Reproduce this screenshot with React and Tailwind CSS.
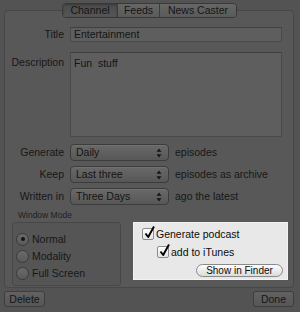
import React from "react";

const font = { fontFamily: '"Liberation Sans", Arial, sans-serif' };

function Arrows() {
  return (
    <svg width="6" height="10" viewBox="0 0 6 10" className="block">
      <path d="M3 0.5 L5.5 3.8 L0.5 3.8 Z" fill="#151515" />
      <path d="M3 9.5 L5.5 6.2 L0.5 6.2 Z" fill="#151515" />
    </svg>
  );
}

function Popup({ value, mt }) {
  return (
    <div
      className={`flex items-center justify-between w-[99px] h-[17px] rounded-[4px] border border-[#3c3c3c] bg-gradient-to-b from-[#696969] to-[#575757] pl-[5px] pr-[6px] shadow-[inset_0_1px_0_#707070] ${mt}`}
    >
      <span className="text-[10.5px] leading-none text-[#141414]">{value}</span>
      <Arrows />
    </div>
  );
}

function Row({ label, value, after, mt }) {
  return (
    <div className={`flex items-center ${mt}`}>
      <div className="w-[59px] text-right text-[10.5px] text-[#171717] leading-none">{label}</div>
      <div className="ml-[6px]">
        <Popup value={value} />
      </div>
      <div className="ml-[6px] text-[10.5px] text-[#171717] leading-none">{after}</div>
    </div>
  );
}

function Radio({ on, label }) {
  return (
    <div className="flex items-center h-[16px]">
      <div className="w-[13px] h-[13px] rounded-full border border-[#3a3a3a] bg-gradient-to-b from-[#6a6a6a] to-[#5a5a5a] flex items-center justify-center">
        {on && <div className="w-[4px] h-[4px] rounded-full bg-[#151515]" />}
      </div>
      <span className="ml-[3px] text-[10.5px] leading-none text-[#171717]">{label}</span>
    </div>
  );
}

function Check({ label, ml }) {
  return (
    <div className={`flex items-center h-[14px] ${ml}`}>
      <div className="relative w-[12px] h-[12px] rounded-[2px] border border-[#8c8c8c] bg-gradient-to-b from-[#ffffff] to-[#e4e4e4]">
        <svg width="12" height="14" viewBox="0 0 12 14" className="absolute left-[1px] top-[-4px]">
          <path d="M1.5 8.5 L4.2 12 L10 1.5" fill="none" stroke="#000" strokeWidth="1.9" strokeLinejoin="round" />
        </svg>
      </div>
      <span className="ml-[2px] text-[10.5px] leading-none text-[#0c0c0c]">{label}</span>
    </div>
  );
}

function DarkButton({ label, w }) {
  return (
    <div
      className={`flex items-center justify-center ${w} h-[16px] rounded-[3px] border border-[#3e3e3e] bg-gradient-to-b from-[#626262] to-[#565656] text-[10.5px] leading-none text-[#151515]`}
    >
      {label}
    </div>
  );
}

export default function App() {
  return (
    <div className="w-[300px] h-[312px] bg-[#535353] overflow-hidden pt-[3px]" style={font}>
      {/* Tabs */}
      <div className="relative z-10 ml-[62px] flex w-[175px] h-[15px] rounded-[4px] border border-[#383838] overflow-hidden text-[10.5px] leading-none text-[#151515]">
        <div className="w-[55px] flex items-center justify-center bg-gradient-to-b from-[#4c4c4c] to-[#555555] border-r border-[#3c3c3c] shadow-[inset_0_1px_2px_#3a3a3a]">
          Channel
        </div>
        <div className="w-[42px] flex items-center justify-center bg-gradient-to-b from-[#666666] to-[#5a5a5a] border-r border-[#3c3c3c]">
          Feeds
        </div>
        <div className="flex-1 flex items-center justify-center bg-gradient-to-b from-[#666666] to-[#5a5a5a]">
          News Caster
        </div>
      </div>

      {/* Panel */}
      <div className="mt-[-8px] ml-[4px] w-[290px] h-[278px] rounded-[4px] border border-[#474747] bg-[#585858] pt-[16px]">
        {/* Title */}
        <div className="flex items-center">
          <div className="w-[59px] text-right text-[10.5px] leading-none text-[#171717]">Title</div>
          <div className="ml-[6px] w-[212px] h-[15px] border border-[#494949] border-t-[#404040] bg-[#5e5e5e] flex items-center pl-[3px] text-[10.5px] leading-none text-[#141414]">
            Entertainment
          </div>
        </div>
        {/* Description */}
        <div className="flex items-start mt-[10px]">
          <div className="w-[59px] text-right text-[10.5px] leading-none text-[#171717] pt-[5px]">Description</div>
          <div className="ml-[6px] w-[212px] h-[85px] border border-[#494949] border-t-[#404040] bg-[#5e5e5e] pl-[3px] pt-[5px] text-[10.5px] leading-none text-[#141414] whitespace-pre">
            {"Fun  stuff"}
          </div>
        </div>
        <Row label="Generate" value="Daily" after="episodes" mt="mt-[7px]" />
        <Row label="Keep" value="Last three" after="episodes as archive" mt="mt-[5px]" />
        <Row label="Written in" value="Three Days" after="ago the latest" mt="mt-[5px]" />

        {/* Bottom section */}
        <div className="flex mt-[5px]">
          <div className="ml-[7px] w-[109px]">
            <div className="pl-[6px] text-[8.5px] leading-none text-[#202020] h-[12px] pt-[1px]">Window Mode</div>
            <div className="w-[109px] h-[64px] rounded-[3px] border border-[#474747] bg-[#555555] pl-[3px] pt-[8px] flex flex-col gap-[1px]">
              <Radio on label="Normal" />
              <Radio label="Modality" />
              <Radio label="Full Screen" />
            </div>
          </div>
          <div className="ml-[12px] mt-[12px] w-[155px] h-[58px] bg-[#e8e8e8] border border-[#f2f2f2] pt-[4px]">
            <Check label="Generate podcast" ml="ml-[8px]" />
            <Check label="add to iTunes" ml="ml-[23px] mt-[4px]" />
            <div className="flex justify-end pr-[4px] mt-[5px]">
              <div className="w-[87px] h-[13px] rounded-full border border-[#8a8a8a] bg-gradient-to-b from-[#fdfdfd] to-[#dcdcdc] flex items-center justify-center text-[10px] leading-none text-[#0c0c0c]">
                Show in Finder
              </div>
            </div>
          </div>
        </div>
      </div>

      {/* Footer buttons */}
      <div className="flex justify-between mt-[3px] ml-[4px] mr-[6px]">
        <DarkButton label="Delete" w="w-[41px]" />
        <DarkButton label="Done" w="w-[41px]" />
      </div>
    </div>
  );
}
